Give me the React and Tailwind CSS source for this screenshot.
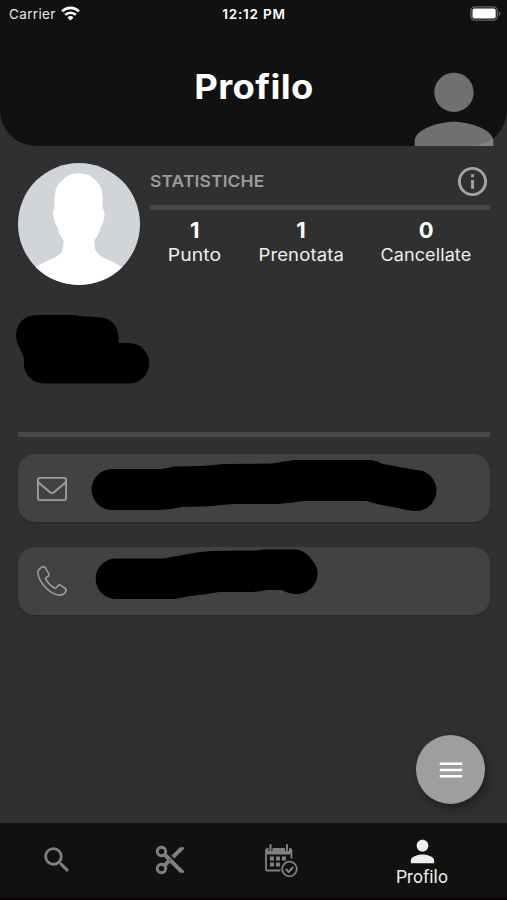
import { MdPerson, MdInfoOutline, MdMenu, MdSearch, MdContentCut } from "react-icons/md";

const stats = [
    { value: 1, label: "Punto", width: "w-[52px]", scale: "scale-x-[1.14]" },
    { value: 1, label: "Prenotata", width: "w-[85px]", scale: "scale-x-[1.09]" },
    { value: 0, label: "Cancellate", width: "w-[90px]", scale: "scale-x-[1.06]" },
];

const StatusBar = () => (
    <div className="grid h-7 grid-cols-3 items-center pl-[9px] pr-[6px] text-white">
        <div className="flex items-center gap-[5px] text-[13.5px] text-gray-200">
            <span className="tracking-[0.35px]">Carrier</span>
            <svg className="-mt-[2px]" width="19" height="15" viewBox="0 0 19 15" fill="none" stroke="#fff" strokeWidth="2.7">
                <path d="M1.100 5.400a12 12 0 0 1 16.800 0" />
                <path d="M4.200 8.900a7.600 7.600 0 0 1 10.600 0" />
                <path d="M9.500 14.400 6.500 11.400a4.300 4.300 0 0 1 6 0z" fill="#fff" stroke="none" />
            </svg>
        </div>
        <div className="-ml-[2px] text-center text-[13.5px] font-semibold tracking-[0.8px]">12:12 PM</div>
        <svg className="-mt-[2px] justify-self-end" width="31" height="15" viewBox="0 0 31 15">
            <rect x="0.9" y="0.9" width="26.4" height="13.2" rx="4" fill="none" stroke="#666" strokeWidth="1.3" />
            <rect x="2.5" y="2.6" width="23.2" height="9.8" rx="2" fill="#fff" />
            <path d="M28.800 5.200c2.200.8 2.200 3.800 0 4.600z" fill="#666" />
        </svg>
    </div>
);

const Header = () => (
    <header className="relative h-[146px] shrink-0 overflow-hidden">
        <div className="h-full rounded-b-[36px] bg-[#111111]">
            <StatusBar />
            <h1 className="scale-x-[1.07] pl-px pt-[38px] text-center text-[34px] font-bold leading-[42px] tracking-[0.4px] text-white">
                Profilo
            </h1>
        </div>
        <MdPerson className="absolute left-[395px] top-[53px] size-[118px] text-white/40" />
    </header>
);

const Avatar = () => (
    <svg className="size-[122px] shrink-0 rounded-full" viewBox="0 0 122 122">
        <rect width="122" height="122" fill="#d1d5da" />
        <path
            d="M61 10.500C52 10.500 48 13 44 18C38 21 36 29 36.500 45C34.500 48 35 52 36 56C37 60 38 62 39.500 64C40.500 70 43 74 45.500 77C46 82 45 87 43 90C39 94 34 96 29 98C23 101 17 104 12 109V122H110V109C105 104 99 101 93 98C88 96 83 94 79 90C77 87 76 82 76.500 77C79 74 81.500 70 82.500 64C84 62 85 60 86 56C87 52 86.500 48 84.500 45C85 29 84 24 79 19C74 13 70 10.500 61 10.500Z"
            fill="#fff"
        />
    </svg>
);

const Stats = () => (
    <section className="w-[340px]">
        <div className="flex h-[37px] items-center justify-between">
            <h2 className="origin-left scale-x-[1.06] text-[16.5px] font-semibold tracking-[0.1px] text-[#9b9b9b]">
                STATISTICHE
            </h2>
            <MdInfoOutline className="size-[35px] text-[#a3a3a3]" />
        </div>
        <div className="mt-[5px] h-[5px] bg-[#484848]" />
        <div className="flex justify-around pt-[8px]">
            {stats.map((s) => (
                <div key={s.label} className={`flex flex-col items-center ${s.width}`}>
                    <span className="text-[22px] font-bold leading-[25px] text-white">{s.value}</span>
                    <span className={`whitespace-nowrap text-[17px] leading-[25px] tracking-[0.1px] text-[#eeeeee] ${s.scale}`}>
                        {s.label}
                    </span>
                </div>
            ))}
        </div>
    </section>
);

const MailIcon = () => (
    <svg className="mt-[2px]" width="30" height="24" viewBox="0 0 30 24" fill="none" stroke="#a0a0a0" strokeWidth="1.8" strokeLinejoin="round">
        <rect x="0.9" y="0.9" width="28.200" height="22.200" rx="2" />
        <path d="M1.200 5.200 13 15.300q2 1.700 4 0L28.800 5.200" />
    </svg>
);

const PhoneIcon = () => (
    <svg width="30" height="30" viewBox="0 0 30 30" fill="none" stroke="#9a9a9a" strokeWidth="1.6" strokeLinejoin="round">
        <path d="M5.100 1C3 2.200 1 4.200.9 6.300c.1 5.500 4 11.600 8.500 16 4.500 4.200 9.500 7 14.300 6.800 2.300-.2 4.200-1.900 5.200-4 .5-1 .3-1.900-.6-2.600l-4.200-2.900c-1.300-.9-2.500-.9-3.400.3l-1.200 1.700c-.5.700-1.300.8-2 .4-3.600-2-6.600-4.900-8.700-8.600-.4-.8-.2-1.500.5-1.900l1.900-1.200c1.100-.8 1.100-1.800.4-3L8.300 1.800C7.500.6 6.200.3 5.100 1z" />
    </svg>
);

const CalendarIcon = () => (
    <svg width="33" height="34" viewBox="0 0 33 34" fill="none" stroke="#808080">
        <path d="M15.500 26.500H2.600q-1.600 0-1.600-1.600V6.600Q1 5 2.600 5h22.200q1.600 0 1.600 1.600v8" strokeWidth="1.8" />
        <path d="M1.500 5h24.500v5.500H1.500z" fill="#808080" stroke="none" />
        <path d="M5.500 0v7M22 0v7" stroke="#111" strokeWidth="4" />
        <path d="M5.500 1v5M22 1v5" strokeWidth="2" strokeLinecap="round" />
        <path
            d="M5 12.500h4v4H5zM11 12.500h4v4h-4zM17 12.500h4v4h-4zM5 18.500h4v4H5zM11 18.500h4v4h-4z"
            fill="#808080"
            stroke="none"
        />
        <circle cx="24.500" cy="25" r="7.300" fill="#111" strokeWidth="1.800" />
        <path d="m20.800 25 2.900 3 4.500-5" strokeWidth="2" />
    </svg>
);

const NameCover = () => (
    <svg className="ml-[-2px] mt-[29px]" width="134" height="70" viewBox="16 314 134 70">
        <path
            d="M36 315H72Q77 315 79 316L96 317Q112 317 117 329Q119 335 118.500 343H129A20.200 20.200 0 0 1 129 383.500H44A20 20 0 0 1 24 361Q24 357 22 353L18 345Q16 341 16 335A20 20 0 0 1 36 315Z"
            fill="#000"
        />
    </svg>
);

const ContactCard = ({ icon, children }) => (
    <div className="flex h-[68px] items-center rounded-[17px] bg-[#424242] pl-[19px] shadow-[0_1px_2px_rgba(0,0,0,0.2)]">
        {icon}
        {children}
    </div>
);

const BottomNav = () => (
    <nav className="flex h-[77px] shrink-0 items-center border-b-2 border-[#080305] bg-[#111111] text-[#808080]">
        <div className="-mt-px flex w-[113px] justify-center">
            <MdSearch className="size-[34px]" />
        </div>
        <div className="-mt-px flex w-[113px] justify-center">
            <MdContentCut className="size-[34px]" />
        </div>
        <div className="flex w-[111px] justify-center">
            <CalendarIcon />
        </div>
        <div className="flex flex-1 flex-col items-center font-['Roboto',sans-serif] text-[#eeeeee]">
            <MdPerson className="size-[35px]" />
            <span className="-mt-[2px] text-[17.5px] leading-5 tracking-[0.1px]">Profilo</span>
        </div>
    </nav>
);

export default function App() {
    return (
        <div className="relative flex h-[900px] w-[507px] flex-col overflow-hidden bg-[#303030] font-['Inter',sans-serif]">
            <Header />
            <main className="flex-1 pl-[18px] pr-[17px] pt-[17px]">
                <div className="flex gap-[10px]">
                    <Avatar />
                    <Stats />
                </div>
                <NameCover />
                <div className="mb-[17px] mt-[48px] h-[5px] bg-[#484848]" />
                <div className="flex flex-col gap-[25px]">
                    <ContactCard icon={<MailIcon />}>
                        <svg className="mb-[4px] ml-[24px]" width="348" height="54" viewBox="91 459 348 54">
                            <path
                                d="M112 469H160Q166 468.500 174 466.500L202 466L224 464L272 463.500Q284 461 295 460H371Q377 461 383 464L416 470A20.500 20.500 0 0 1 416 511Q407 511 399 508Q382 506 366 501H304Q290 503 278 504H232Q208 507 182 507Q168 510 157 510H112A20.500 20.500 0 0 1 112 469Z"
                                fill="#000"
                            />
                        </svg>
                    </ContactCard>
                    <ContactCard icon={<PhoneIcon />}>
                        <svg className="mb-[14px] ml-[25px]" width="226" height="54" viewBox="93 547 226 54">
                            <path
                                d="M115.500 558.500H164L184 555Q198 552 212 551L257 550.500L264 549.500H297Q306 550 313 560Q319 567 318.500 574A20.500 20.500 0 0 1 297 594Q290 594 283 590H268Q260 592 250 592H220Q210 594 200 595Q188 596 176 599H115.500A20.300 20.300 0 0 1 115.500 558.500Z"
                                fill="#000"
                            />
                        </svg>
                    </ContactCard>
                </div>
            </main>
            <button className="absolute left-[416px] top-[735px] flex size-[69px] items-center justify-center rounded-full bg-[#9e9e9e] text-white shadow-[3px_5px_9px_rgba(0,0,0,0.35)]">
                <MdMenu className="size-[30px]" />
            </button>
            <BottomNav />
        </div>
    );
}
